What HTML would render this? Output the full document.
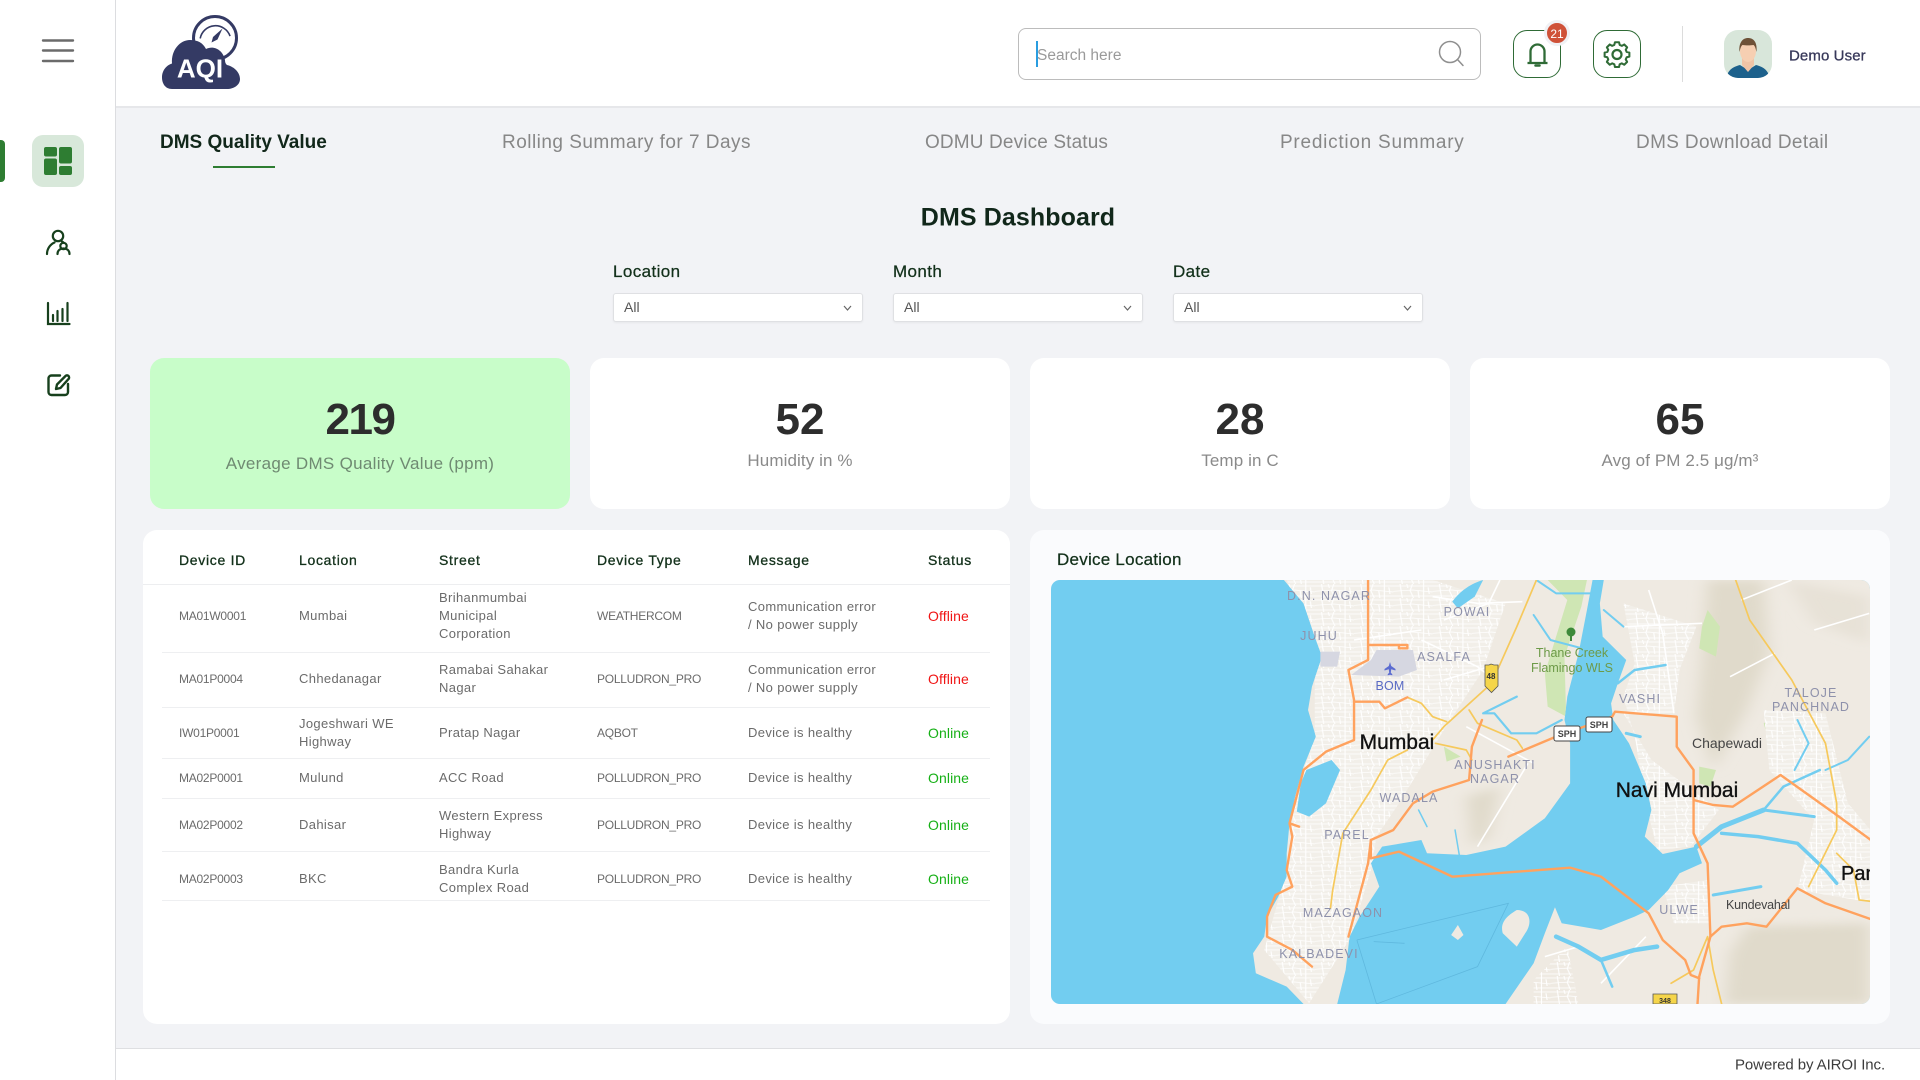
<!DOCTYPE html>
<html lang="en"><head><meta charset="utf-8"><title>DMS Dashboard</title>
<style>
*{box-sizing:border-box;margin:0;padding:0}
html,body{width:1920px;height:1080px;overflow:hidden;background:#f2f3f6;font-family:"Liberation Sans",sans-serif;color:#222}
.a{position:absolute}
.t{position:absolute;white-space:nowrap;transform:translateY(-50%)}
.tc{position:absolute;white-space:nowrap;transform:translate(-50%,-50%)}
#side{left:0;top:0;width:116px;height:1080px;background:#fff;border-right:1px solid #dcdde0}
#head{left:116px;top:0;width:1804px;height:108px;background:#fff;border-bottom:2px solid #e6e7ea}
#foot{left:116px;top:1048px;width:1804px;height:32px;background:#fff;border-top:1px solid #dedfe2}
.tab{font-size:19px;letter-spacing:.48px;color:#878787;top:143px}
.lab{font-size:17px;letter-spacing:.4px;color:#12301a;top:272px;-webkit-text-stroke:.25px #12301a}
.sel{top:293px;width:250px;height:29px;background:#fff;border:1px solid #dfe0e3;border-radius:3px;box-shadow:0 1px 2px rgba(0,0,0,.05)}
.sel span{position:absolute;left:10px;top:5px;font-size:14px;color:#555;line-height:17px}
.sel svg{position:absolute;right:10px;top:11px}
.card{top:358px;width:420px;height:151px;background:#fff;border-radius:14px}
.num{font-size:44px;font-weight:bold;color:#2d2d2d;left:50%;top:62px}
.sub{font-size:17px;letter-spacing:.1px;color:#8a8a8a;left:50%;top:103px}
table{position:absolute;left:162px;top:530px;width:828px;border-collapse:collapse;table-layout:fixed}
th{height:54px;padding-top:5px;text-align:left;font-weight:normal;font-size:14px;letter-spacing:.7px;color:#12301a;-webkit-text-stroke:.3px #12301a;vertical-align:middle}
td{font-size:13px;letter-spacing:.35px;line-height:18px;color:#6b6b6b;vertical-align:middle;border-bottom:1px solid #eeeff1}
td.k{font-size:12px;letter-spacing:-.25px}
th:first-child,td:first-child{padding-left:17px}
td:last-child{font-size:14px;letter-spacing:.1px}
.off{color:#f01414}.on{color:#16b016}
.ml{font-family:"Liberation Sans",sans-serif;font-size:12.5px;letter-spacing:1.1px;fill:#8e91ab;text-anchor:middle}
.mb{font-family:"Liberation Sans",sans-serif;font-size:21px;fill:#111;text-anchor:middle;stroke:#111;stroke-width:.35px}
.m *{vector-effect:non-scaling-stroke}
.m path.r{fill:none;stroke-linecap:round;stroke-linejoin:round}
</style></head><body>

<aside id="side" class="a">
 <svg class="a" style="left:0;top:0" width="116" height="420" fill="none">
  <g stroke="#6b6b6b" stroke-width="2.4" stroke-linecap="round"><path d="M43 40.500H73M43 50.500H73M43 61H73"/></g>
  <rect x="-6" y="140" width="11" height="42" rx="4" fill="#2e7d32"/>
  <rect x="32" y="135" width="52" height="52" rx="11" fill="#d8e8da"/>
  <g fill="#2e7d32"><rect x="44" y="147" width="13" height="9.500" rx="2"/><rect x="44" y="158.500" width="13" height="16.500" rx="2"/><rect x="59" y="147" width="13" height="16.500" rx="2"/><rect x="59" y="166" width="13" height="9" rx="2"/></g>
  <g stroke="#17401d" stroke-width="2.200" stroke-linecap="round"><circle cx="58" cy="236" r="5.200"/><path d="M47 254c0-5 3-9.500 7.500-11.500"/><circle cx="63.500" cy="246" r="3.200"/><path d="M57.500 254c0-3.500 2.500-5.500 6-5.500s6 2 6 5.500M62 241.500c1 .5 1.500 1 2 1.500"/></g>
  <g stroke="#17401d" stroke-width="2.200" stroke-linecap="round"><path d="M48 303V324H69.500"/><path d="M53 315V321M57.500 311V321M62.500 309V321M67.500 303V321"/></g>
  <g stroke="#17401d" stroke-width="2.400" stroke-linecap="round" stroke-linejoin="round"><path d="M60 375.500H51.500a3 3 0 0 0-3 3V392a3 3 0 0 0 3 3H65a3 3 0 0 0 3-3V384"/><path d="M56 389l1-4.500L65.500 376a1.800 1.800 0 0 1 3 3L60.500 388z"/></g>
 </svg>
</aside>

<header id="head" class="a"></header>
<svg class="a" style="left:155px;top:8px" width="95" height="90">
 <circle cx="60" cy="30" r="21.500" fill="#fff" stroke="#343a64" stroke-width="3"/>
 <path d="M45.500 33a15.500 15.500 0 0 1 29-7.500" fill="none" stroke="#343a64" stroke-width="1.600" transform="rotate(10 60 30)"/>
 <path d="M67.500 18.500L62.500 29.500L56.500 32.500L58 27z" fill="#343a64" transform="translate(0 2)"/>
 <path d="M17 81C10 81 7 75 7 69.500 7 62 12 57 17 55.500 16 42 25 32 35 32 43 32 48 35 51 41 59 37 68 42 70 52 70 55 71 56 72 57 80 59 85 65 85 71 85 77 79 81 72 81z" fill="#343a64"/>
 <text x="45" y="69.500" text-anchor="middle" font-family="Liberation Sans" font-weight="bold" font-size="26" fill="#fff">AQI</text>
</svg>

<div class="a" style="left:1018px;top:28px;width:463px;height:52px;background:#fff;border:1.500px solid #bcbcbc;border-radius:8px"></div>
<div class="a" style="left:1036px;top:41px;width:2px;height:26px;background:#2a9de0"></div>
<div class="t" style="left:1037px;top:56px;font-size:15.500px;letter-spacing:0;color:#9a9a9a">Search here</div>
<svg class="a" style="left:1435px;top:38px" width="32" height="32" fill="none" stroke="#8f8f8f" stroke-width="1.500"><circle cx="15" cy="14" r="10.500"/><path d="M22.500 21.500L28 27.500" stroke-linecap="round"/></svg>

<div class="a" style="left:1513px;top:30px;width:48px;height:48px;border:1.500px solid #2f6b36;border-radius:14px"></div>
<svg class="a" style="left:1513px;top:30px" width="48" height="48" fill="none" stroke="#2f6b36" stroke-width="2.300" stroke-linejoin="round"><path d="M14.500 33H34.500M17.500 33V21.500a7 7 0 0 1 14 0V33"/><path d="M22.500 35.500h4" stroke-width="2.500" stroke-linecap="round"/></svg>
<div class="a" style="left:1544px;top:20px;width:26px;height:26px;border-radius:50%;background:#cf5138;border:3px solid #f0f1f5"></div>
<div class="tc" style="left:1557px;top:33.500px;font-size:12px;color:#fff">21</div>

<div class="a" style="left:1593px;top:30px;width:48px;height:48px;border:1.500px solid #2f6b36;border-radius:14px"></div>
<svg class="a" style="left:1593px;top:30px" width="48" height="48" fill="none" stroke="#2f6b36" stroke-width="2.200"><circle cx="24" cy="24.500" r="4.500"/><path stroke-linejoin="round" d="M21.800 13.500h4.400l.7 2.900 2.300 1 2.600-1.500 3.100 3.100-1.500 2.600 1 2.300 2.900.7v4.400l-2.900.7-1 2.300 1.500 2.600-3.100 3.100-2.600-1.500-2.300 1-.7 2.900h-4.400l-.7-2.900-2.300-1-2.600 1.500-3.100-3.100 1.500-2.600-1-2.300-2.900-.7v-4.400l2.900-.7 1-2.300-1.500-2.600 3.100-3.100 2.600 1.500 2.300-1z" transform="translate(0 -2) translate(24 24) scale(.93) translate(-24 -24)"/></svg>

<div class="a" style="left:1682px;top:26px;width:1px;height:56px;background:#dcdcdc"></div>
<svg class="a" style="left:1724px;top:30px;border-radius:14px" width="48" height="48">
 <rect width="48" height="48" fill="#d8e6da"/>
 <path d="M3 48c0-7 5-11 13-13l8 5 8-5c8 2 13 6 13 13z" fill="#1d618c"/>
 <path d="M18 28h12v7l-6 7-6-7z" fill="#f0c4a6"/>
 <ellipse cx="24" cy="21" rx="8" ry="11" fill="#f6cfb2"/>
 <path d="M15.500 22c-1-9 3-14 8.500-14s9.500 4 8.500 14c-1-4-1.500-6-3-7-3 .5-8 .5-11 0-1.500 1-2 3-3 7z" fill="#6e5238"/>
</svg>
<div class="t" style="left:1789px;top:55.500px;font-size:15px;letter-spacing:.1px;color:#38395a;-webkit-text-stroke:.3px #38395a">Demo User</div>

<nav>
 <div class="t" style="left:160px;top:143px;font-size:19px;font-weight:bold;color:#11271a">DMS Quality Value</div>
 <div class="a" style="left:213px;top:166px;width:62px;height:2px;background:#2e7d32"></div>
 <div class="t tab" style="left:502px">Rolling Summary for 7 Days</div>
 <div class="t tab" style="left:925px;letter-spacing:.14px">ODMU Device Status</div>
 <div class="t tab" style="left:1280px;letter-spacing:.75px">Prediction Summary</div>
 <div class="t tab" style="left:1636px;letter-spacing:.35px">DMS Download Detail</div>
</nav>

<div class="tc" style="left:1018px;top:218px;font-size:25px;font-weight:bold;letter-spacing:.1px;color:#11271a">DMS Dashboard</div>

<div class="t lab" style="left:613px">Location</div>
<div class="t lab" style="left:893px">Month</div>
<div class="t lab" style="left:1173px">Date</div>
<div class="a sel" style="left:613px"><span>All</span><svg width="9" height="7" fill="none" stroke="#666" stroke-width="1.200"><path d="M1 1l3.500 4L8 1"/></svg></div>
<div class="a sel" style="left:893px"><span>All</span><svg width="9" height="7" fill="none" stroke="#666" stroke-width="1.200"><path d="M1 1l3.500 4L8 1"/></svg></div>
<div class="a sel" style="left:1173px"><span>All</span><svg width="9" height="7" fill="none" stroke="#666" stroke-width="1.200"><path d="M1 1l3.500 4L8 1"/></svg></div>

<div class="a card" style="left:150px;background:#c8fdc9"><div class="tc num" style="letter-spacing:-1.500px">219</div><div class="tc sub" style="top:106px;letter-spacing:.3px;color:#6f8a72">Average DMS Quality Value (ppm)</div></div>
<div class="a card" style="left:590px"><div class="tc num">52</div><div class="tc sub">Humidity in %</div></div>
<div class="a card" style="left:1030px"><div class="tc num">28</div><div class="tc sub">Temp in C</div></div>
<div class="a card" style="left:1470px"><div class="tc num">65</div><div class="tc sub">Avg of PM 2.5 μg/m³</div></div>

<section class="a" style="left:143px;top:530px;width:867px;height:494px;background:#fff;border-radius:14px"></section>
<div class="a" style="left:143px;top:584px;width:867px;height:1px;background:#edeef0"></div>
<table>
 <colgroup><col style="width:137px"><col style="width:140px"><col style="width:158px"><col style="width:151px"><col style="width:180px"><col style="width:62px"></colgroup>
 <thead><tr><th>Device ID</th><th>Location</th><th>Street</th><th>Device Type</th><th>Message</th><th>Status</th></tr></thead>
 <tbody>
 <tr style="height:68px"><td class="k" style="padding-bottom:4px">MA01W0001</td><td style="padding-bottom:4px">Mumbai</td><td style="padding-bottom:4px">Brihanmumbai<br>Municipal<br>Corporation</td><td class="k" style="padding-bottom:4px">WEATHERCOM</td><td style="padding-bottom:4px">Communication error<br>/ No power supply</td><td class="off" style="padding-bottom:4px">Offline</td></tr>
 <tr style="height:55px"><td class="k" style="padding-bottom:2px">MA01P0004</td><td style="padding-bottom:2px">Chhedanagar</td><td style="padding-bottom:2px">Ramabai Sahakar<br>Nagar</td><td class="k" style="padding-bottom:2px">POLLUDRON_PRO</td><td style="padding-bottom:2px">Communication error<br>/ No power supply</td><td class="off" style="padding-bottom:2px">Offline</td></tr>
 <tr style="height:51px"><td class="k">IW01P0001</td><td>Jogeshwari WE<br>Highway</td><td>Pratap Nagar</td><td class="k">AQBOT</td><td>Device is healthy</td><td class="on">Online</td></tr>
 <tr style="height:40px"><td class="k">MA02P0001</td><td>Mulund</td><td>ACC Road</td><td class="k">POLLUDRON_PRO</td><td>Device is healthy</td><td class="on">Online</td></tr>
 <tr style="height:53px"><td class="k">MA02P0002</td><td>Dahisar</td><td>Western Express<br>Highway</td><td class="k">POLLUDRON_PRO</td><td>Device is healthy</td><td class="on">Online</td></tr>
 <tr style="height:49px"><td class="k" style="padding-top:6px">MA02P0003</td><td style="padding-top:6px">BKC</td><td style="padding-top:6px">Bandra Kurla<br>Complex Road</td><td class="k" style="padding-top:6px">POLLUDRON_PRO</td><td style="padding-top:6px">Device is healthy</td><td class="on" style="padding-top:6px">Online</td></tr>
 </tbody>
</table>

<section class="a" style="left:1030px;top:530px;width:860px;height:494px;background:#fafbfd;border-radius:14px"></section>
<div class="t" style="left:1057px;top:560px;font-size:17px;letter-spacing:.25px;color:#12301a;-webkit-text-stroke:.25px #12301a">Device Location</div>

<svg class="a" style="left:1051px;top:580px;border-radius:9px" width="819" height="424" viewBox="0 0 819 424">
 <defs>
  <filter id="bl" x="-30%" y="-30%" width="160%" height="160%"><feGaussianBlur stdDeviation="14"/></filter>
  <pattern id="st" patternUnits="userSpaceOnUse" width="70" height="42">
   <path d="M0 6H70M0 22L34 18L70 24M0 36H70M12 0L16 42M34 0L30 20L36 42M54 0V42M24 0L26 12M44 20L46 42M62 10L64 30" fill="none" stroke="#fff" stroke-width="2"/>
  </pattern>
  <pattern id="st2" patternUnits="userSpaceOnUse" width="46" height="30" patternTransform="rotate(14)">
   <path d="M0 10H46M0 24H46M8 0V30M30 0V30" fill="none" stroke="#fff" stroke-width="1.500"/>
  </pattern>
  <clipPath id="lc">
   <path d="M435 30L470 100L490 200L503 260L485 350L478 420L492 500L470 590L455 680L445 760L440 850L440 920L425 980L405 1040L400 1100L380 1150L385 1210L440 1250L470 1302H530L545 1200L552 1100L570 1040L605 950L590 880L610 830L680 810L690 850L760 855L830 830L900 745L945 640L945 520L935 450L940 380L960 250L975 120L985 30z"/>
   <path d="M1005 30L998 100L1003 200L1045 270L1030 340L1018 400L1022 450L1050 520L1080 640L1090 720L1078 800L1110 852L1170 830L1180 880L1140 910L1120 960L1085 1020L1060 1040L1000 1080L930 1060L918 1012L900 1090L880 1180L830 1302H1490V30z"/>
  </clipPath>
 </defs>
 <rect width="819" height="424" fill="#72cdf0"/>
 <g class="m" transform="scale(.5612 .3333) translate(-20 -30)">
  <!-- land -->
  <path fill="#efeae2" d="M435 30L470 100L490 200L503 260L485 350L478 420L492 500L470 590L455 680L445 760L440 850L440 920L425 980L405 1040L400 1100L380 1150L385 1210L440 1250L470 1302H530L545 1200L552 1100L570 1040L605 950L590 880L610 830L680 810L690 850L760 855L830 830L900 745L945 640L945 520L935 450L940 380L960 250L975 120L985 30z"/>
  <path fill="#efeae2" d="M1005 30L998 100L1003 200L1045 270L1030 340L1018 400L1022 450L1050 520L1080 640L1090 720L1078 800L1110 852L1170 830L1180 880L1140 910L1120 960L1085 1020L1060 1040L1000 1080L930 1060L918 1012L900 1090L880 1180L830 1302H1490V30z"/>
  <!-- hills -->
  <g clip-path="url(#lc)">
  <g fill="#e0dacb" filter="url(#bl)">
   <path d="M1190 30L1290 30L1300 250L1260 420L1200 600L1170 440L1180 250z"/>
   <path d="M1260 1070L1478 1060V1302H1220L1230 1150z"/>
   <path d="M760 680L820 650L800 800L770 830z"/>
   <path d="M1330 30L1478 80V220L1380 160z" opacity=".5"/>
  </g>
  <!-- greens -->
  <path fill="#cfe6b4" d="M905 30H975L965 110L935 260L938 440L905 410L900 310L920 200L940 90z"/>
  <path fill="#cfe6b4" d="M1190 120L1212 170L1205 260L1175 235L1180 170z"/>
  <path fill="#cfe6b4" d="M1290 460L1310 430L1340 440L1335 520L1295 490z"/>
  <path fill="#cfe6b4" d="M462 905L485 935L470 965L455 950z"/>
  <path fill="#cfe6b4" d="M720 530L750 560L725 575z"/>
  <path fill="#cfe6b4" d="M1175 590L1205 600L1195 650L1175 640z"/>
  <!-- urban -->
  <g>
   <path fill="#f2efe9" d="M440 30H700L830 100L790 300L720 480L640 700L600 800L590 900L555 1100L480 1300L400 1140L440 900L455 680L490 500L490 250z"/>
   <path fill="#f2efe9" d="M1040 100L1170 170L1140 300L1130 430L1040 430L1090 570L1210 720L1160 830L1100 840L1080 700L1060 500L1040 380L1060 280z"/>
   <path fill="#f2efe9" d="M1290 420L1400 430L1440 700L1490 800V1000L1350 960L1380 750L1300 600z"/>
   <path fill="#f2efe9" d="M1110 950L1190 930L1195 1060L1130 1060z"/>
  </g>
  <g fill="url(#st)">
   <path d="M440 30H700L830 100L790 300L720 480L640 700L600 800L590 900L555 1100L480 1300L400 1140L440 900L455 680L490 500L490 250z"/>
   <path d="M1040 100L1170 170L1140 300L1130 430L1040 430L1090 570L1210 720L1160 830L1100 840L1080 700L1060 500L1040 380L1060 280z"/>
   <path d="M1290 420L1400 430L1440 700L1490 800V1000L1350 960L1380 750L1300 600z"/>
   <path d="M1110 950L1190 930L1195 1060L1130 1060z"/>
   <path d="M880 1230L940 1130L960 1302H880z"/>
  </g>
  <g fill="none" stroke="#fff" stroke-width="1.600">
   <path d="M700 80L780 100L860 95M820 30L800 100L720 150M680 210L780 290L810 330M560 210L680 180M720 330L800 290M1085 60L1110 190L1130 430M1040 170L1180 160M1250 90L1340 30M1380 180L1478 130M1230 320L1310 250M900 1160L960 1130M1000 1240L1080 1100M760 470L880 580M870 580L780 830"/>
  </g>
  </g>
  <!-- lakes -->
  <path fill="#72cdf0" d="M520 570L535 600L510 700L480 740L458 725L465 640L475 600z"/>
  <path fill="#72cdf0" d="M735 95C750 60 770 40 790 30L775 80L745 115z"/>
  <!-- water channels -->
  <g class="w" fill="none" stroke="#72cdf0">
   <path class="r" stroke-width="2" d="M885 30L920 70H985M880 135L910 210L1000 250M1005 120L1040 170"/>
   <path class="r" stroke-width="2.200" d="M840 490L810 430L790 430L850 380M840 490H885L930 450"/>
   <path class="r" stroke-width="2.500" d="M1030 340L1060 300L1115 285"/>
   <path class="r" stroke-width="3" d="M1045 490L1070 500"/>
   <path class="r" stroke-width="5" d="M1170 830L1215 770L1290 720"/>
   <path class="r" stroke-width="2.500" d="M1290 720L1325 650L1390 600"/>
   <path class="r" stroke-width="3.500" d="M1215 790L1280 800L1350 820L1400 900L1420 940"/>
   <path class="r" stroke-width="3" d="M1290 720L1380 740"/>
   <path class="r" stroke-width="2" d="M1350 450L1370 520L1345 600M1400 600L1440 570L1478 500"/>
   <path class="r" stroke-width="3" d="M1200 975L1285 950"/>
   <path class="r" stroke-width="4.500" d="M920 1100L960 1130L1000 1170L1060 1140L1100 1130"/>
   <path class="r" stroke-width="2.500" d="M1000 1170L1020 1250"/>
   <path class="r" stroke-width="1.500" d="M675 720L690 770M740 780L750 880"/>
  </g>
  <path fill="#efeae2" d="M850 1020C875 1020 878 1060 865 1090L850 1130L825 1090C820 1060 830 1040 850 1020z"/>
  <path fill="#efeae2" d="M745 1065L755 1095L745 1110L733 1095z"/>
  <path fill="none" stroke="#5fb8de" stroke-width=".8" d="M565 1110L835 1000L780 1190L600 1302M565 1110L600 1302M595 1115L650 1120"/>
  <!-- airport -->
  <path fill="#d6d7e1" d="M555 315L590 270L600 240H665L672 300L640 320zM500 245H535L530 290H500z"/>
  <!-- roads -->
  <g stroke="#f6c95c" stroke-width="1.700">
   <path class="r" d="M885 30L850 170L805 340L720 470L700 510"/>
   <path class="r" d="M655 540L620 570L590 660L540 790L522 960L518 1015"/>
   <path class="r" d="M1240 30L1265 150L1340 330L1400 520L1420 700L1420 780L1370 950"/>
   <path class="r" d="M1420 850L1450 900L1460 990L1485 995"/>
   <path class="r" d="M765 420L780 460L850 510L860 535M705 520L760 540L770 570"/>
   <path class="r" d="M1125 1240L1165 1200L1190 1100L1200 1200L1215 1302"/>
   <path class="r" d="M655 382L680 400L700 440L725 455"/>
  </g>
  <g stroke="#ffa25e" stroke-width="2.400">
   <path class="r" d="M585 30L585 225L655 225V235H640V225M585 225L585 270L550 300L560 390L560 510L510 545L470 600L445 760L462 770M445 760L450 800L440 900L450 950L420 975L405 1040L405 1100L450 1140L485 1190"/>
   <path class="r" d="M560 395H605L615 415L655 382"/>
   <path class="r" d="M835 560L920 500L1020 440L1025 425L1135 440V530L1165 600V790L1190 880L1195 1100L1175 1220L1172 1302"/>
   <path class="r" d="M590 865L640 845L735 920L945 893L1000 920L1085 1030L1110 1110L1150 1170L1160 1215L1175 1225"/>
   <path class="r" d="M590 865V810L630 780L665 700L700 665L765 630L770 530L788 450"/>
   <path class="r" d="M590 810L585 880L550 1100"/>
   <path class="r" d="M1165 690L1200 705L1235 710L1320 615L1420 735L1485 815"/>
   <path class="r" d="M1195 1100L1215 1070L1260 1060L1295 1070L1350 955L1400 1000L1485 1050"/>
  </g>
 </g>
 <!-- shields -->
 <path d="M434 85h4l2-1 3 1h4v21l-6.500 6.500L434 106z" fill="#f5d54a" stroke="#555" stroke-width=".8"/>
 <text x="440" y="99" text-anchor="middle" font-family="Liberation Sans" font-weight="bold" font-size="8" fill="#333">48</text>
 <g font-family="Liberation Sans" font-weight="bold" font-size="9" fill="#444" text-anchor="middle">
  <rect x="503" y="146" width="26" height="15" rx="2" fill="#fff" stroke="#444"/><text x="516" y="157">SPH</text>
  <rect x="535" y="137" width="26" height="15" rx="2" fill="#fff" stroke="#444"/><text x="548" y="148">SPH</text>
 </g>
 <path d="M602 414h24v10h-24z" fill="#f5d54a" stroke="#555" stroke-width=".8"/>
 <text x="614" y="423" text-anchor="middle" font-family="Liberation Sans" font-weight="bold" font-size="7" fill="#333">348</text>
 <!-- icons -->
 <circle cx="520" cy="52" r="4.500" fill="#3e8a3a"/><rect x="519" y="54" width="2" height="7" fill="#3e8a3a"/>
 <path d="M339 82l1.200 4 4.300 3v1.500l-4.300-1.200-.4 3.500 1.500 1.500v1l-2.300-.6-2.300.6v-1l1.500-1.500-.4-3.500-4.300 1.200v-1.500l4.300-3z" fill="#5a6bd0"/>
 <!-- labels -->
 <text class="ml" x="278" y="20">D.N. NAGAR</text>
 <text class="ml" x="416" y="36">POWAI</text>
 <text class="ml" x="268" y="60">JUHU</text>
 <text class="ml" x="393" y="81">ASALFA</text>
 <text class="ml" x="339" y="110" style="fill:#5a6bc4;letter-spacing:.2px">BOM</text>
 <text class="ml" x="589" y="123">VASHI</text>
 <text class="ml" x="760" y="117">TALOJE</text>
 <text class="ml" x="760" y="131">PANCHNAD</text>
 <text class="ml" x="444" y="189">ANUSHAKTI</text>
 <text class="ml" x="444" y="203">NAGAR</text>
 <text class="ml" x="358" y="222">WADALA</text>
 <text class="ml" x="296" y="259">PAREL</text>
 <text class="ml" x="292" y="337">MAZAGAON</text>
 <text class="ml" x="268" y="378">KALBADEVI</text>
 <text class="ml" x="628" y="334">ULWE</text>
 <text class="ml" x="521" y="77" style="fill:#6d9a48;letter-spacing:0;font-size:12.500px">Thane Creek</text>
 <text class="ml" x="521" y="92" style="fill:#6d9a48;letter-spacing:0;font-size:12.500px">Flamingo WLS</text>
 <text class="ml" x="676" y="168" style="fill:#444;letter-spacing:0;font-size:14px">Chapewadi</text>
 <text class="ml" x="707" y="329" style="fill:#444;letter-spacing:-.2px;font-size:12.500px">Kundevahal</text>
 <text class="mb" x="346" y="169">Mumbai</text>
 <text class="mb" x="626" y="217">Navi Mumbai</text>
 <text class="mb" x="790" y="300" style="text-anchor:start;font-size:20px">Pan</text>
</svg>

<footer id="foot" class="a"></footer>
<div class="t" style="left:1735px;top:1065px;font-size:15px;letter-spacing:-.08px;color:#3c3c3c">Powered by AIROI Inc.</div>
</body></html>
